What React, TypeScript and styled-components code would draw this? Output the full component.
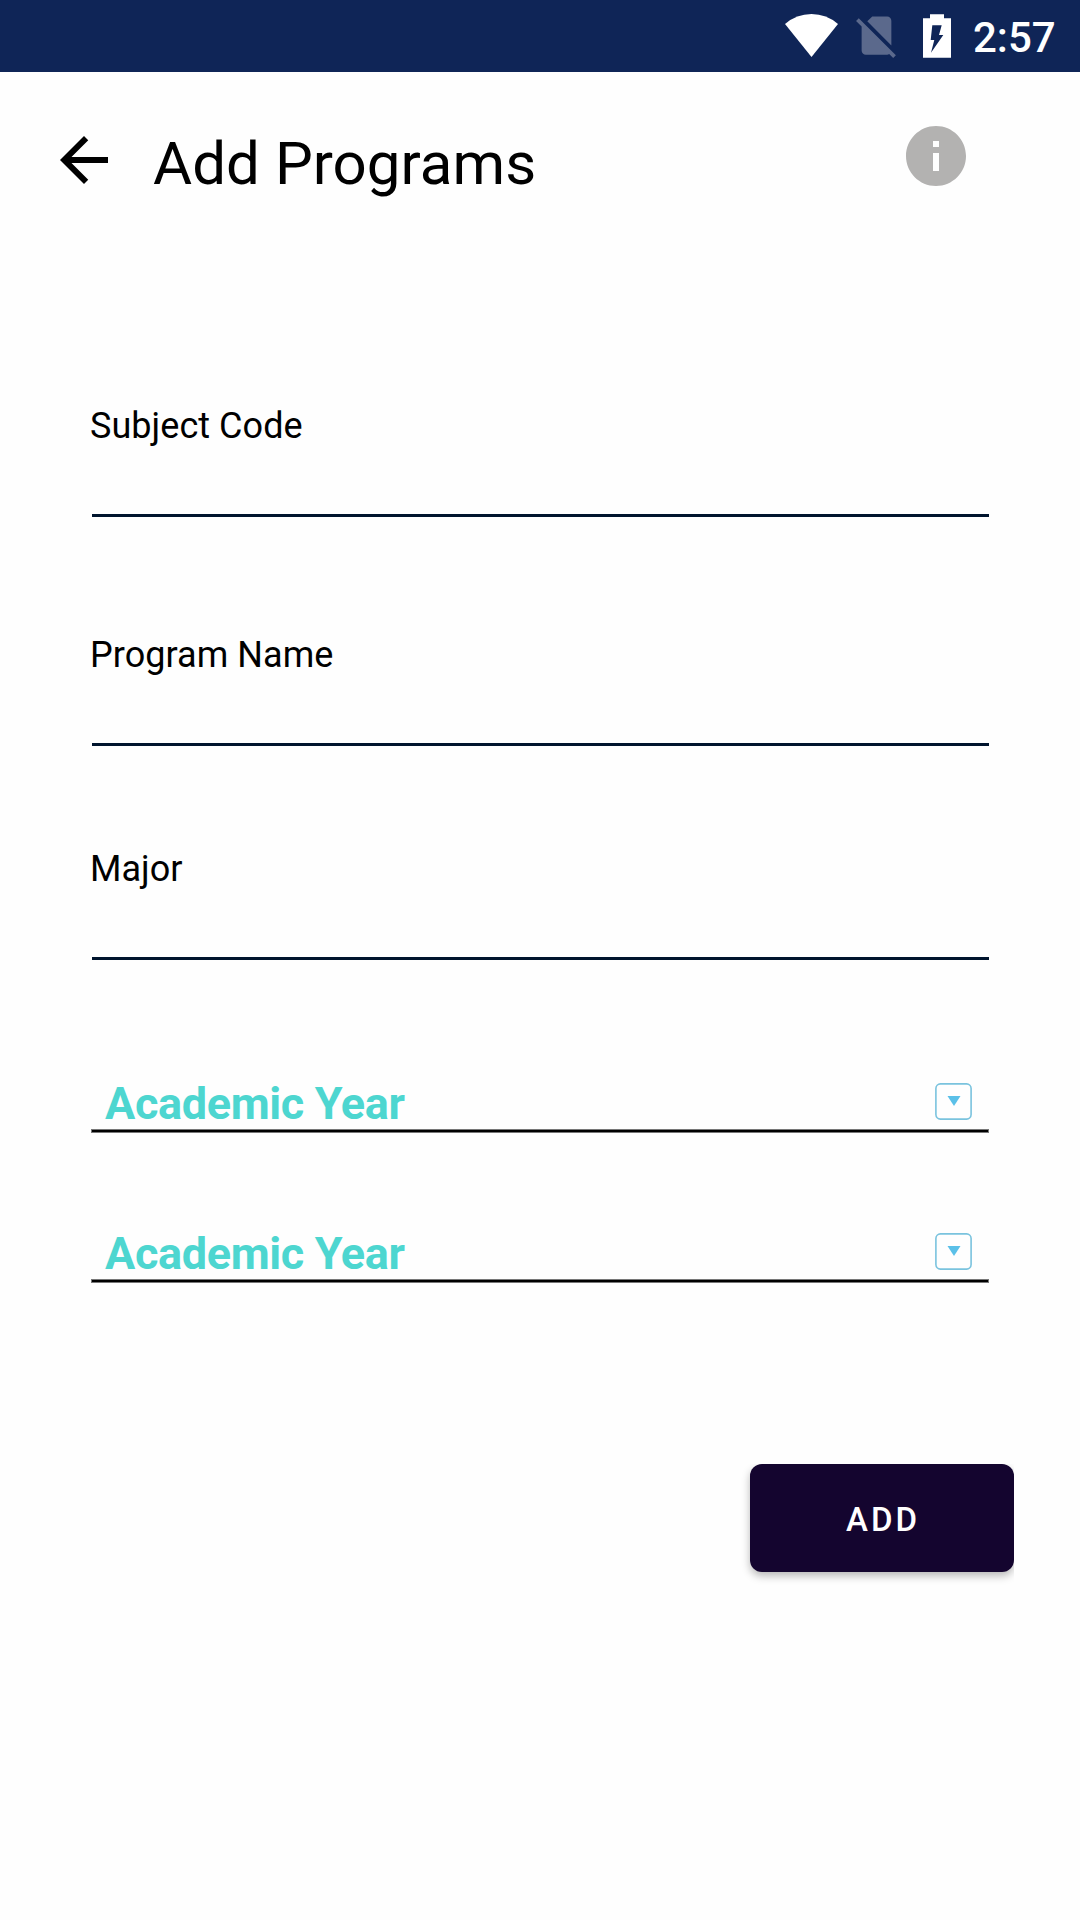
import React from "react";
import styled, { createGlobalStyle } from "styled-components";

const GlobalStyle = createGlobalStyle`
  * { box-sizing: border-box; }
  body { margin: 0; background: #fefefe; font-family: Roboto, "Noto Sans", sans-serif; }
`;

const Screen = styled.div`
  width: 1080px;
  height: 1920px;
  display: flex;
  flex-direction: column;
  background: #fefefe;
  color: #000;
  overflow: hidden;
`;

const StatusBar = styled.header`
  flex: none;
  display: flex;
  align-items: flex-start;
  height: 72px;
  padding-left: 785px;
  background: #0f2557;
`;

const StatusIcon = styled.svg<{ $top: number; $gap: number }>`
  flex: none;
  display: block;
  margin-top: ${(p) => p.$top}px;
  margin-right: ${(p) => p.$gap}px;
`;

const Clock = styled.span`
  margin-top: 12px;
  font-size: 42px;
  line-height: 52px;
  font-weight: 500;
  color: #fff;
  white-space: nowrap;
`;

const AppBar = styled.div`
  flex: none;
  display: flex;
  align-items: flex-start;
  height: 228px;
  padding: 48px 108px 0 48px;
`;

const IconButton = styled.button`
  flex: none;
  width: 72px;
  height: 72px;
  padding: 0;
  border: 0;
  background: none;
  svg { display: block; }
`;

const BackButton = styled(IconButton)`
  margin-top: 4px;
`;

const Title = styled.h1`
  flex: 1;
  margin: 8px 0 0 33px;
  font-size: 60px;
  line-height: 72px;
  font-weight: 400;
  letter-spacing: 0.05px;
  white-space: nowrap;
`;

const Form = styled.form`
  display: flex;
  flex-direction: column;
  padding: 0 91px;
`;

const Field = styled.label<{ $top: number }>`
  display: flex;
  flex-direction: column;
  justify-content: space-between;
  height: 115px;
  margin-top: ${(p) => p.$top}px;
  padding: 0 0.5px;
`;

const FieldLabel = styled.span`
  margin-left: -1.5px;
  font-size: 36px;
  line-height: 48px;
  letter-spacing: 0.05px;
`;

const Underline = styled.span`
  height: 3px;
  background: #00142d;
`;

const Select = styled.div<{ $top: number }>`
  display: flex;
  justify-content: space-between;
  align-items: flex-start;
  height: 50px;
  margin-top: ${(p) => p.$top}px;
  padding: 0 17px 0 14px;
`;

const SelectText = styled.span`
  margin-top: -2px;
  font-size: 45px;
  line-height: 54px;
  font-weight: 700;
  letter-spacing: -0.35px;
  color: #4dd6d0;
  white-space: nowrap;
`;

const DropIcon = styled.svg`
  display: block;
  margin-top: 4px;
`;

const SelectLine = styled.div`
  height: 4px;
  border: 1px solid #777;
  background: #000;
`;

const Actions = styled.div`
  align-self: flex-end;
  margin: 181px 66px 0 0;
  padding: 0 0 16px 16px;
  overflow: hidden;
`;

const AddButton = styled.button`
  display: block;
  width: 264px;
  height: 108px;
  padding: 3px 0 0 2px;
  border: 0;
  border-radius: 12px;
  background: #14052f;
  box-shadow: 0 4px 8px rgba(0, 0, 0, 0.28);
  color: #fff;
  font-family: inherit;
  font-size: 33px;
  line-height: 40px;
  font-weight: 500;
  letter-spacing: 3px;
`;

const textFields = [
  { label: "Subject Code", top: 102 },
  { label: "Program Name", top: 114 },
  { label: "Major", top: 99 },
];

const selects = [
  { label: "Academic Year", top: 119 },
  { label: "Academic Year", top: 96 },
];

export default function App() {
  return (
    <>
      <GlobalStyle />
      <Screen>
        <StatusBar>
          <StatusIcon $top={14} $gap={13} width="53" height="43" viewBox="0 0 53 43">
            <path d="M0 10Q11.500 0 26.500 0Q41.500 0 53 10L26.500 43Z" fill="#fff" />
          </StatusIcon>
          <StatusIcon $top={10} $gap={21} width="51" height="51" viewBox="0 0 24 24">
            <path
              fill="#5b698c"
              d="M18.990 5c0-1.100-.890-2-1.990-2h-7L7.660 5.340 19 16.680 18.990 5zM3.650 3.880L2.380 5.150 5 7.770V19c0 1.100.900 2 2 2h10.010c.350 0 .670-.100.960-.260l1.880 1.880 1.270-1.270L3.650 3.880z"
            />
          </StatusIcon>
          <StatusIcon $top={14} $gap={22} width="28" height="44" viewBox="0 0 28 44">
            <path
              fill="#fff"
              fillRule="evenodd"
              d="M7 0.300H21V4.300H28V43.800H0V4.300H7ZM9.300 11.300L7.700 26H11.300L8 38.700L20.300 21H16L18.700 11.300Z"
            />
          </StatusIcon>
          <Clock>2:57</Clock>
        </StatusBar>
        <AppBar>
          <BackButton aria-label="Back">
            <svg width="72" height="72" viewBox="0 0 24 24">
              <path d="M20 11H7.830l5.590-5.590L12 4l-8 8 8 8 1.410-1.410L7.830 13H20v-2z" />
            </svg>
          </BackButton>
          <Title>Add Programs</Title>
          <IconButton aria-label="Information">
            <svg width="72" height="72" viewBox="0 0 24 24">
              <path
                fill="#b3b2b1"
                d="M12 2C6.480 2 2 6.480 2 12s4.480 10 10 10 10-4.480 10-10S17.520 2 12 2zm1 15h-2v-6h2v6zm0-8h-2V7h2v2z"
              />
            </svg>
          </IconButton>
        </AppBar>
        <Form onSubmit={(e) => e.preventDefault()}>
          {textFields.map((f) => (
            <Field key={f.label} $top={f.top}>
              <FieldLabel>{f.label}</FieldLabel>
              <Underline />
            </Field>
          ))}
          {selects.map((s, i) => (
            <React.Fragment key={i}>
              <Select $top={s.top}>
                <SelectText>{s.label}</SelectText>
                <DropIcon width="37" height="37" viewBox="0 0 37 37">
                  <rect x="0.900" y="0.900" width="35.200" height="35.200" rx="4.500" fill="none" stroke="#7ac3de" strokeWidth="1.600" />
                  <path d="M12.500 13H25.500L19 23Z" fill="#5bc0e8" />
                </DropIcon>
              </Select>
              <SelectLine />
            </React.Fragment>
          ))}
        </Form>
        <Actions>
          <AddButton>ADD</AddButton>
        </Actions>
      </Screen>
    </>
  );
}
